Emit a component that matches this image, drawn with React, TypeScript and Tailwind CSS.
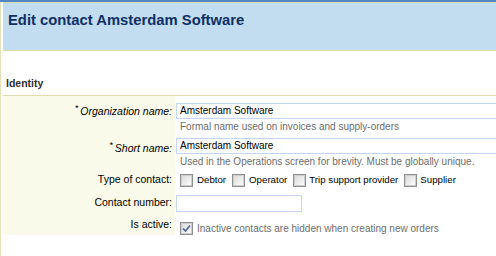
import React from "react";

const font = { fontFamily: '"Liberation Sans", Arial, sans-serif' };

function Check({ checked = false }: { checked?: boolean }) {
  return (
    <span className="inline-flex h-[13px] w-[13px] shrink-0 items-center justify-center border border-[#8e8f8f] bg-[#f4f4f4]">
      <span className="flex h-[11px] w-[11px] items-center justify-center border border-[#cfcfcf] bg-gradient-to-br from-[#dcdcdc] to-[#fbfbfb]">
        {checked && (
          <svg width="9" height="9" viewBox="0 0 9 9">
            <path d="M1 4.5 L3.5 7 L8 1.5" fill="none" stroke="#4b63a0" strokeWidth="1.6" />
          </svg>
        )}
      </span>
    </span>
  );
}

export default function App() {
  return (
    <div className="relative h-[256px] w-[496px] overflow-hidden bg-white" style={font}>
      <div className="h-[2px] bg-[#5185c5]" />
      <div className="flex h-[254px] border-l border-[#e2e2b8]">
        <div className="w-[2px] bg-white" />
        <div className="min-w-0 flex-1 overflow-hidden">
          <div className="h-[49px] border-l border-t border-b border-[#dedeaa] bg-[#c2dcf0] pl-[4px] pt-[7px] text-[14.8px] font-bold leading-[20px] text-[#0f2f66]">
            Edit contact Amsterdam Software
          </div>
          <div className="flex h-[45px] items-end border-b border-[#dcdcae] pb-[3px] pl-[3px] text-[10.5px] font-bold text-[#2f2f2f]">
            Identity
          </div>
          <div className="flex text-[10px] text-black">
            <div className="w-[172px] shrink-0 bg-[#fafaea] text-right text-[10.5px]">
              <div className="h-[39px] pr-[3px] pt-[8px] italic">
                <sup className="mr-[2px] text-[9px]">*</sup>Organization name:
              </div>
              <div className="h-[34px] pr-[3px] pt-[6px] italic">
                <sup className="mr-[2px] text-[9px]">*</sup>Short name:
              </div>
              <div className="h-[22px] pr-[3px] pt-[3px]">Type of contact:</div>
              <div className="h-[24px] pr-[3px] pt-[4px]">Contact number:</div>
              <div className="h-[20px] pr-[3px] pt-[2px]">Is active:</div>
            </div>
            <div className="min-w-0 flex-1 pl-[1px]">
              <div className="h-[39px] pt-[7px]">
                <div className="-mr-[20px] h-[16px] border border-[#c3d6f2] pl-[3px] leading-[14px] whitespace-nowrap">
                  Amsterdam Software
                </div>
                <div className="pl-[4px] leading-[15px] text-[#6d6d6d] whitespace-nowrap">
                  Formal name used on invoices and supply-orders
                </div>
              </div>
              <div className="h-[34px] pt-[3px]">
                <div className="-mr-[20px] h-[16px] border border-[#c3d6f2] pl-[3px] leading-[14px] whitespace-nowrap">
                  Amsterdam Software
                </div>
                <div className="pl-[4px] leading-[15px] text-[#6d6d6d] whitespace-nowrap">
                  Used in the Operations screen for brevity. Must be globally unique.
                </div>
              </div>
              <div className="flex h-[22px] items-center whitespace-nowrap pl-[4px] text-[9.7px]">
                <Check />
                <span className="ml-[4px] mr-[6px]">Debtor</span>
                <Check />
                <span className="ml-[4px] mr-[6px]">Operator</span>
                <Check />
                <span className="ml-[3px] mr-[6px]">Trip support provider</span>
                <Check />
                <span className="ml-[3px]">Supplier</span>
              </div>
              <div className="h-[24px] pt-[4px]">
                <div className="h-[17px] w-[126px] border border-[#c3d6f2]" />
              </div>
              <div className="flex h-[20px] items-center whitespace-nowrap pl-[4px] pt-[6px]">
                <Check checked />
                <span className="ml-[4px] text-[#6d6d6d]">Inactive contacts are hidden when creating new orders</span>
              </div>
            </div>
          </div>
        </div>
      </div>
    </div>
  );
}
